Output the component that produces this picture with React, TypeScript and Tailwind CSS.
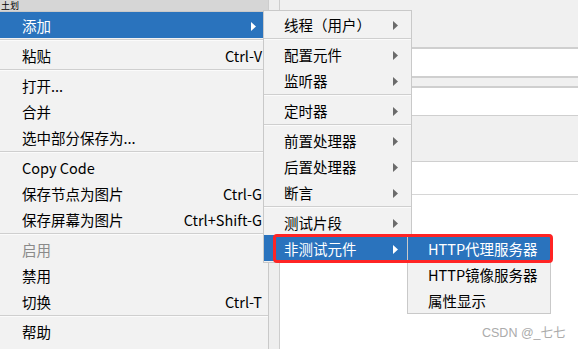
import React from "react";

type Item =
  | { sep: true }
  | { label: string; shortcut?: string; arrow?: boolean; active?: boolean; disabled?: boolean };

const mainItems: Item[] = [
  { label: "添加", arrow: true, active: true },
  { sep: true },
  { label: "粘贴", shortcut: "Ctrl-V" },
  { sep: true },
  { label: "打开..." },
  { label: "合并" },
  { label: "选中部分保存为..." },
  { sep: true },
  { label: "Copy Code" },
  { label: "保存节点为图片", shortcut: "Ctrl-G" },
  { label: "保存屏幕为图片", shortcut: "Ctrl+Shift-G" },
  { sep: true },
  { label: "启用", disabled: true },
  { label: "禁用" },
  { label: "切换", shortcut: "Ctrl-T" },
  { sep: true },
  { label: "帮助" },
];

const addItems: Item[] = [
  { label: "线程（用户）", arrow: true },
  { sep: true },
  { label: "配置元件", arrow: true },
  { label: "监听器", arrow: true },
  { sep: true },
  { label: "定时器", arrow: true },
  { sep: true },
  { label: "前置处理器", arrow: true },
  { label: "后置处理器", arrow: true },
  { label: "断言", arrow: true },
  { sep: true },
  { label: "测试片段", arrow: true },
  { label: "非测试元件", arrow: true, active: true },
];

const nonTestItems: Item[] = [
  { label: "HTTP代理服务器", active: true },
  { label: "HTTP镜像服务器" },
  { label: "属性显示" },
];

const Arrow = ({ white }: { white?: boolean }) => (
  <svg width="5" height="9" viewBox="0 0 5 9" className="shrink-0">
    <path d="M0 0L5 4.5L0 9Z" fill={white ? "#ffffff" : "#6b6b6b"} />
  </svg>
);

const MenuRows = ({ items, textPad, arrowPad }: { items: Item[]; textPad: string; arrowPad: string }) => (
  <>
    {items.map((it, i) =>
      "sep" in it ? (
        <div key={i} className="h-[4px] pt-[1px]">
          <div className="h-px bg-[#cfcfcf]" />
          <div className="h-px bg-[#fbfbfb]" />
        </div>
      ) : (
        <div
          key={i}
          className={`h-[26px] pt-[2px] flex items-center justify-between ${textPad} ${it.shortcut ? "pr-[6px]" : arrowPad} ${
            it.active ? "bg-[#2a73bd] text-white" : it.disabled ? "text-[#8a8a8a]" : "text-black"
          }`}
        >
          <span className="whitespace-nowrap leading-none">{it.label}</span>
          {it.shortcut && <span className="whitespace-nowrap leading-none">{it.shortcut}</span>}
          {it.arrow && <Arrow white={it.active} />}
        </div>
      )
    )}
  </>
);

export default function App() {
  return (
    <div className="relative w-[578px] h-[349px] overflow-hidden bg-white font-['Noto_Sans_CJK_SC','Noto_Sans',sans-serif] text-[14.5px]">
      {/* 背景 */}
      <div className="flex h-full">
        <div className="w-[268px] flex flex-col bg-[#f0f0f0]">
          <div className="h-[11px] bg-[#d6d6d6] pl-[1px]">
            <span className="block text-[9px] leading-[11px] text-black">土划</span>
          </div>
        </div>
        <div className="w-[12px] flex flex-col bg-[#eeeeee] border-l border-r border-[#cdcdcd]" />
        <div className="flex-1 flex flex-col">
          <div className="h-[47px] bg-[#f0f0f0]" />
          <div className="h-[2px] bg-[#cfcfcf]" />
          <div className="h-[27px] bg-white" />
          <div className="h-[2px] bg-[#cfcfcf]" />
          <div className="h-[8px] bg-[#f0f0f0]" />
          <div className="h-[2px] bg-[#cfcfcf]" />
          <div className="h-[27px] bg-white" />
          <div className="h-px bg-[#cfcfcf]" />
          <div className="h-[45px] bg-[#f0f0f0]" />
          <div className="h-px bg-[#cfcfcf]" />
          <div className="h-[32px] bg-white" />
          <div className="h-px bg-[#d6d6d6]" />
          <div className="flex-1 bg-white" />
        </div>
      </div>

      {/* 右键菜单 */}
      <div className="absolute left-0 top-[11px] w-[269px] h-[345px] bg-[#f2f2f2] border-t border-r border-[#c9c9c9]">
        <MenuRows items={mainItems} textPad="pl-[22px]" arrowPad="pr-[12px]" />
      </div>

      <div className="absolute left-[263px] top-[10px] w-[149px] bg-[#f2f2f2] border border-[#c9c9c9] pb-px">
        <MenuRows items={addItems} textPad="pl-[20px]" arrowPad="pr-[13px]" />
      </div>

      <div className="absolute left-[407px] top-[234px] w-[144px] bg-[#f2f2f2] border border-[#c9c9c9]">
        <MenuRows items={nonTestItems} textPad="pl-[20px]" arrowPad="pr-[8px]" />
      </div>

      {/* 红框标注 */}
      <div className="absolute left-[273px] top-[234px] w-[280px] h-[29px] border-[3px] border-[#ff2424] rounded-[4px]" />

      <div className="absolute left-[482px] top-[325px] text-[12.5px] leading-[16px] text-[#ababab] font-['Liberation_Sans','Noto_Sans_CJK_SC',sans-serif]">
        CSDN @_七七
      </div>
    </div>
  );
}
